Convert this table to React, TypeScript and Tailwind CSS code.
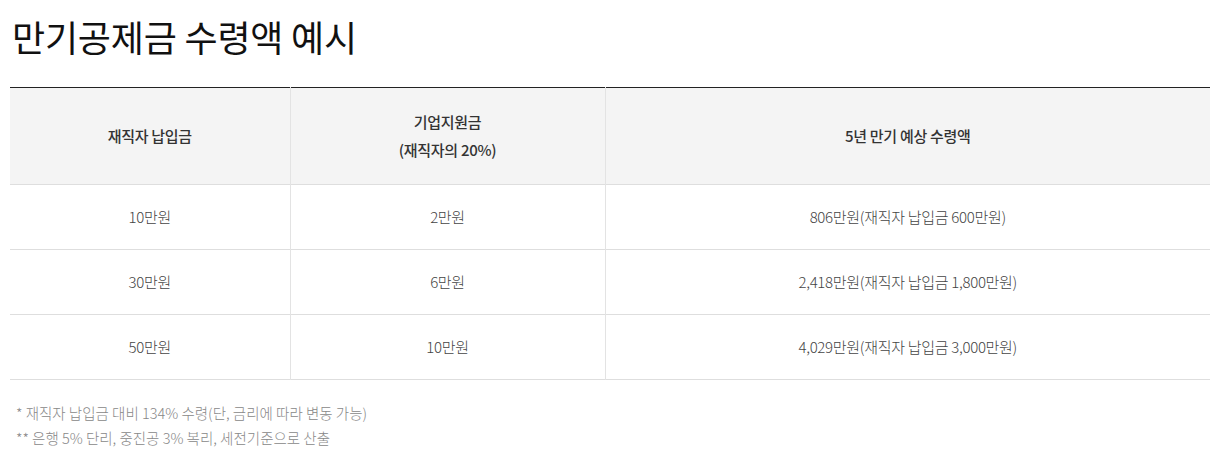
const rows = [
  { pay: "10만원", support: "2만원", total: "806만원(재직자 납입금 600만원)" },
  { pay: "30만원", support: "6만원", total: "2,418만원(재직자 납입금 1,800만원)" },
  { pay: "50만원", support: "10만원", total: "4,029만원(재직자 납입금 3,000만원)" },
]

export default function App() {
  return (
    <div className="w-[1227px] h-[463px] bg-white px-[10px] font-['Noto_Sans_CJK_KR',sans-serif]">
      {/* Title */}
      <h2 className="pt-[18px] pl-[2px] text-[36px] leading-none tracking-[-0.2px] text-[#111]">
        만기공제금 수령액 예시
      </h2>

      {/* Table */}
      <table className="mt-[33px] w-[1200px] table-fixed border-collapse border-t border-t-[#222] text-[15px] tracking-[-0.3px]">
        <colgroup>
          <col className="w-[280px]" />
          <col className="w-[315px]" />
          <col />
        </colgroup>
        <thead>
          <tr className="h-[97px] bg-[#f4f4f4] border-b border-[#dedede] text-[#333]">
            <th className="border-r border-[#e3e3e3] font-medium">재직자 납입금</th>
            <th className="border-r border-[#e3e3e3] font-medium leading-[28px]">
              기업지원금
              <br />
              (재직자의 20%)
            </th>
            <th className="font-medium">5년 만기 예상 수령액</th>
          </tr>
        </thead>
        <tbody>
          {rows.map((r) => (
            <tr key={r.pay} className="h-[65px] border-b border-[#dedede] text-[#444] font-light">
              <td className="border-r border-[#e3e3e3] text-center">{r.pay}</td>
              <td className="border-r border-[#e3e3e3] text-center">{r.support}</td>
              <td className="text-center">{r.total}</td>
            </tr>
          ))}
        </tbody>
      </table>

      {/* Notes */}
      <div className="mt-[20px] pl-[6px] text-[14.5px] leading-[25px] tracking-[0px] text-[#888] font-light">
        <p>* 재직자 납입금 대비 134% 수령(단, 금리에 따라 변동 가능)</p>
        <p>** 은행 5% 단리, 중진공 3% 복리, 세전기준으로 산출</p>
      </div>
    </div>
  )
}
